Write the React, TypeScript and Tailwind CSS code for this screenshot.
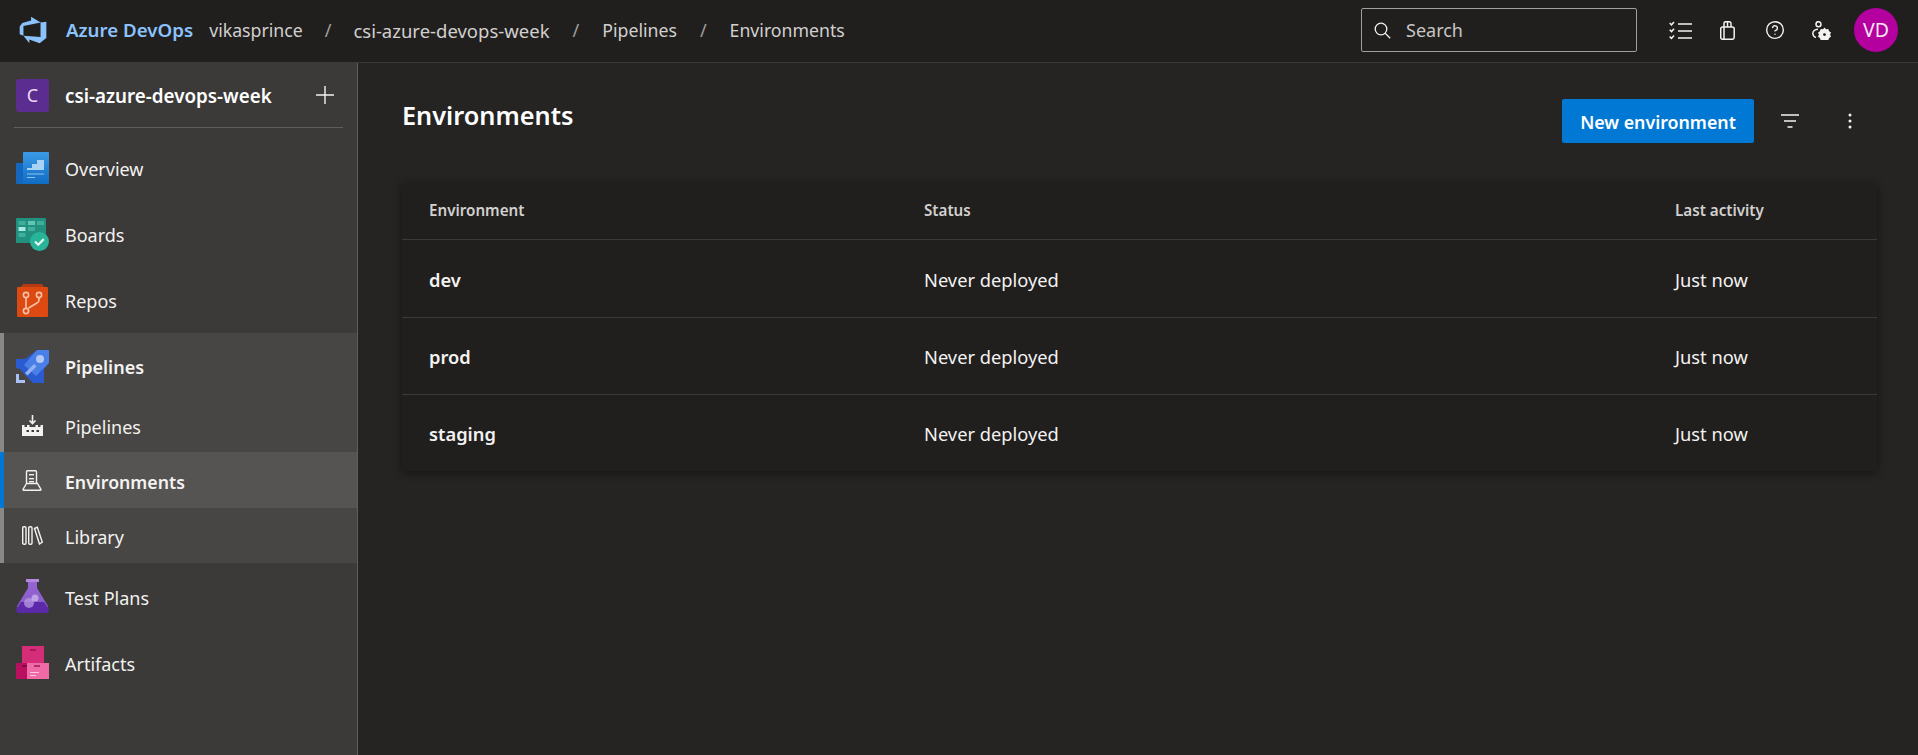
import React from "react";
import { CircleHelp } from "lucide-react";

function Logo() {
  return (
    <svg width="30" height="30" viewBox="0 0 18 18" className="shrink-0">
      <path fill="#8cc2fb" d="M17 4v9.74l-4 3.28-6.2-2.26V17L3.29 12.41l10.23.8V4.44Zm-3.41.49L7.85 1V3.29L2.58 4.84 1 6.87v4.61l2.26 1V6.57Z" />
    </svg>
  );
}

function OverviewIcon() {
  return (
    <svg width="33" height="33" viewBox="0 0 33 33">
      <defs>
        <linearGradient id="ov" x1="0" y1="0" x2="0" y2="1">
          <stop offset="0" stopColor="#3c9be6" />
          <stop offset="1" stopColor="#0f6cc4" />
        </linearGradient>
      </defs>
      <path fill="#1467bd" d="M1 11h10v21H1a1 1 0 0 1-1-1V12a1 1 0 0 1 1-1z" />
      <path fill="url(#ov)" d="M7 1a1 1 0 0 1 1-1h24a1 1 0 0 1 1 1v30a1 1 0 0 1-1 1H7z" />
      <path fill="#a9d3f5" d="M11 16h5v-4h5V8h7v8h0v2H11z" />
      <rect x="11" y="21.5" width="17" height="1" fill="#8cc4f0" />
      <rect x="11" y="25" width="8" height="1" fill="#8cc4f0" />
    </svg>
  );
}

function BoardsIcon() {
  return (
    <svg width="33" height="33" viewBox="0 0 33 33">
      <rect x="0" y="0" width="30" height="25" rx="1" fill="#23917f" />
      <rect x="2.5" y="3" width="7" height="4" fill="#3fae9b" />
      <rect x="12" y="3" width="7" height="4" fill="#62c5b4" />
      <rect x="21" y="3" width="7" height="4" fill="#3fae9b" />
      <rect x="2.5" y="9" width="7" height="4" fill="#a8eadd" />
      <rect x="12" y="9" width="7" height="4" fill="#3fae9b" />
      <rect x="2.5" y="15" width="7" height="4" fill="#3fae9b" />
      <circle cx="23.5" cy="23.5" r="9.5" fill="#27b498" />
      <path d="M19 23.5l3.2 3.2 5.6-5.6" fill="none" stroke="#e6f8f4" strokeWidth="2.2" />
    </svg>
  );
}

function ReposIcon() {
  return (
    <svg width="33" height="33" viewBox="0 0 33 33">
      <path fill="#b53a12" d="M7 0h19l3 4H4z" />
      <path fill="#dc4a12" d="M2 3h29a1 1 0 0 1 1 1v28a1 1 0 0 1-1 1H2a1 1 0 0 1-1-1V4a1 1 0 0 1 1-1z" />
      <g fill="none" stroke="#f7c1a6" strokeWidth="1.6">
        <circle cx="10" cy="11" r="2.6" />
        <circle cx="23" cy="11" r="2.6" />
        <circle cx="10" cy="27" r="2.6" />
        <path d="M10 13.6v11M23 13.6v2.4q0 2-2 3l-8.5 5" />
      </g>
    </svg>
  );
}

function PipelinesIcon() {
  return (
    <svg width="33" height="33" viewBox="0 0 33 33">
      <path fill="#2a5bd0" d="M0 9h9L20 1q1-1 2-1h10a1 1 0 0 1 1 1v11q0 1-1 2l-4 5v14H17l-7-7-6-7-4-1z" />
      <path fill="#4a7fe8" d="M20 1q1-1 2-1h10a1 1 0 0 1 1 1v11q0 1-1 2L20 26 8 15z" />
      <circle cx="24" cy="9" r="4" fill="#b3c8f8" />
      <path fill="#93b1f2" d="M9 23l9-9 2.500 2.500-9 9z" />
      <path fill="#a9c0f5" d="M0 24h3v6h6v3H0z" />
    </svg>
  );
}

function FlaskIcon() {
  return (
    <svg width="33" height="34" viewBox="0 0 33 34">
      <defs>
        <linearGradient id="fl" x1="0" y1="0" x2="0" y2="1">
          <stop offset="0" stopColor="#9464d2" />
          <stop offset="1" stopColor="#8a5ccb" />
        </linearGradient>
      </defs>
      <rect x="10" y="0" width="13" height="3" fill="#b18ae0" />
      <path fill="url(#fl)" d="M12 3h9v6l11.500 19H.5L12 9z" />
      <path fill="#5c2aa8" d="M5 23h23l5 7.500q0 2.500-2.500 3.500h-28Q0 33 0 30.500z" />
      <circle cx="13" cy="24" r="5" fill="#b79be3" opacity=".75" />
      <circle cx="19" cy="19" r="3.500" fill="#c9b3ea" opacity=".8" />
    </svg>
  );
}

function ArtifactsIcon() {
  return (
    <svg width="33" height="33" viewBox="0 0 33 33">
      <rect x="6" y="0" width="22" height="17" fill="#d62d79" />
      <rect x="0" y="17" width="11" height="16" fill="#b80f5e" />
      <rect x="11" y="17" width="22" height="16" fill="#f06aa8" />
      <rect x="14" y="3" width="6" height="2" fill="#a81a5c" />
      <rect x="6" y="19" width="5" height="2" fill="#7e0c42" />
      <rect x="18" y="19" width="6" height="2" fill="#b52a6e" />
      <rect x="14" y="26" width="9" height="1" fill="#fbc4dc" />
      <rect x="14" y="29" width="6" height="1" fill="#fbc4dc" />
    </svg>
  );
}

function SubPipelinesIcon() {
  return (
    <svg width="22" height="22" viewBox="0 0 22 22">
      <g fill="none" stroke="#f3f2f1" strokeWidth="1.6">
        <path d="M10.500 0v8M7.500 5.500l3 3 3-3" />
      </g>
      <path fill="#f3f2f1" d="M0 10h2.500v2H5v-2h2.500v2h6v-2H16v2h2.500v-2H21v11H0z" />
      <g fill="#3b3a39">
        <rect x="4.500" y="15" width="2.500" height="2" />
        <rect x="9.500" y="15" width="2.500" height="2" />
        <rect x="14.500" y="15" width="2.500" height="2" />
      </g>
    </svg>
  );
}

function EnvIcon() {
  return (
    <svg width="20" height="21" viewBox="0 0 20 21">
      <g fill="none" stroke="#f3f2f1" strokeWidth="1.4">
        <path d="M4.500 13.500V1.700a1 1 0 0 1 1-1h8a1 1 0 0 1 1 1v11.800" />
        <path d="M4.500 13.500L1 19.500q0 .8 .8 .8h16.400q.8 0 .8-.8l-3.500-6z" />
      </g>
      <rect x="7" y="4" width="5" height="1.400" fill="#f3f2f1" />
      <rect x="7" y="8" width="5" height="1.400" fill="#f3f2f1" />
      <rect x="7" y="11" width="5" height="1.400" fill="#f3f2f1" />
    </svg>
  );
}

function LibraryIcon() {
  return (
    <svg width="21" height="19" viewBox="0 0 21 19">
      <g fill="none" stroke="#f3f2f1" strokeWidth="1.4">
        <rect x=".7" y=".7" width="3.300" height="17.500" rx="1.200" />
        <rect x="6.700" y=".7" width="3.300" height="17.500" rx="1.200" />
        <path d="M12.500 2.500l2.800-1.300 5 15-2.800 1.800z" />
      </g>
    </svg>
  );
}

function TasksIcon() {
  return (
    <svg width="23" height="19" viewBox="0 0 23 19">
      <g fill="none" stroke="#f3f2f1">
        <path strokeWidth="1.500" d="M.7 2l1.800 1.800L5 1M.7 8.800l1.800 1.800L5 7.800M.7 15.600l1.800 1.800L5 14.600" />
        <path strokeWidth="1.500" d="M9 3h14M9 10h14M9 17h14" />
      </g>
    </svg>
  );
}

function BagIcon() {
  return (
    <svg width="15" height="19" viewBox="0 0 15 19">
      <g fill="none" stroke="#f3f2f1" strokeWidth="1.500">
        <rect x=".7" y="6" width="13.500" height="12.300" rx="2" />
        <path d="M4 6V2.500a1.800 1.800 0 0 1 1.800-1.800h3.400A1.800 1.800 0 0 1 11 2.500V6M7.500 1v5" />
        <path d="M4 6v12.300" />
      </g>
    </svg>
  );
}

function UserGearIcon() {
  return (
    <svg width="19" height="19" viewBox="0 0 19 19">
      <g fill="none" stroke="#f3f2f1" strokeWidth="1.500">
        <circle cx="6.500" cy="3.200" r="2.500" />
        <path d="M6 8.200Q1 8.500 .8 12.500q.2 3 3.200 4" />
      </g>
      <path fill="#f3f2f1" d="M12.500 6.500l1.500 1.800 2.300-.3.800 2.300 1.900 1.200-.9 2.100.9 2.100-1.900 1.200-.8 2.300-2.300-.3-1.500 1.800-1.500-1.800-2.300.3-.8-2.300-1.900-1.200.9-2.100-.9-2.100 1.900-1.200.8-2.300 2.300.3z" />
      <circle cx="12.500" cy="13.600" r="1.400" fill="#201f1e" />
    </svg>
  );
}

function SearchIcon() {
  return (
    <svg width="17" height="17" viewBox="0 0 17 17" className="shrink-0">
      <circle cx="7" cy="7" r="5.800" fill="none" stroke="#f3f2f1" strokeWidth="1.300" />
      <path d="M11.200 11.200l5 5" stroke="#f3f2f1" strokeWidth="1.300" />
    </svg>
  );
}

function FilterIcon() {
  return (
    <svg width="18" height="14" viewBox="0 0 18 14">
      <path d="M0 1h18M3 7h12M6.500 13h5" stroke="#f3f2f1" strokeWidth="1.500" />
    </svg>
  );
}

function KebabIcon() {
  return (
    <svg width="4" height="16" viewBox="0 0 4 16">
      <circle cx="2" cy="2" r="1.500" fill="#f3f2f1" />
      <circle cx="2" cy="8" r="1.500" fill="#f3f2f1" />
      <circle cx="2" cy="14" r="1.500" fill="#f3f2f1" />
    </svg>
  );
}

function NavItem({ icon, label, low }: { icon: React.ReactNode; label: string; low?: boolean }) {
  return (
    <div className="flex h-[66px] items-center pl-4">
      <div className="flex w-[49px] shrink-0 items-center">{icon}</div>
      <span className={(low ? "pt-[4px]" : "pt-[2px]") + " text-[#f3f2f1]"}>{label}</span>
    </div>
  );
}

function SubItem({
  icon,
  label,
  active,
  className,
}: {
  icon: React.ReactNode;
  label: string;
  active?: boolean;
  className: string;
}) {
  return (
    <div
      className={
        "flex items-center border-l-4 pl-[18px] " +
        (active ? "border-[#0078d4] bg-[#565452] text-[17.7px] font-semibold " : "border-[#8a8886] ") +
        className
      }
    >
      <div className="flex w-[43px] shrink-0 items-center">{icon}</div>
      <span className="pt-[4px] text-[#f3f2f1]">{label}</span>
    </div>
  );
}

const rows = [
  { name: "dev", cls: "h-[78px] pt-[3px] border-b border-[#3b3a39]" },
  { name: "prod", cls: "h-[77px] pt-[1px] border-b border-[#3b3a39]" },
  { name: "staging", cls: "h-[76px] pt-[1px]" },
];

export default function App() {
  return (
    <div className="flex h-[755px] w-[1918px] flex-col overflow-hidden bg-[#252423] font-['Noto_Sans',sans-serif] text-[18px] text-[#f3f2f1]">
      <header className="flex h-[63px] shrink-0 items-center border-b border-[#3b3a39] bg-[#201f1e] pb-[2px] pr-5">
        <div className="ml-[18px] flex w-[48px] shrink-0 items-center">
          <Logo />
        </div>
        <span className="pt-[1px] text-[18.7px] font-semibold text-[#8cc2fb]">Azure DevOps</span>
        <span className="ml-[16px] pt-[1px] text-[17.7px] text-[#d2d0ce]">vikasprince</span>
        <span className="mx-[22px] pt-[1px] text-[#a19f9d]">/</span>
        <span className="pt-[1px] text-[18.5px] text-[#d2d0ce]">csi-azure-devops-week</span>
        <span className="mx-[23px] pt-[1px] text-[#a19f9d]">/</span>
        <span className="pt-[1px] text-[17.7px] text-[#d2d0ce]">Pipelines</span>
        <span className="mx-[23px] pt-[1px] text-[#a19f9d]">/</span>
        <span className="pt-[1px] text-[17.7px] text-[#d2d0ce]">Environments</span>
        <div className="ml-auto flex h-[44px] w-[276px] items-center rounded-[2px] border border-[#a19f9d] pl-[12px]">
          <SearchIcon />
          <span className="ml-[15px] text-[#c8c6c4]">Search</span>
        </div>
        <div className="ml-[20px] flex items-center">
          <div className="flex w-[47px] justify-center"><TasksIcon /></div>
          <div className="flex w-[47px] justify-center"><BagIcon /></div>
          <div className="flex w-[47px] justify-center"><CircleHelp size={20} strokeWidth={1.7} color="#f3f2f1" /></div>
          <div className="flex w-[47px] justify-center"><UserGearIcon /></div>
        </div>
        <div className="ml-[9px] flex h-[44px] w-[44px] items-center justify-center rounded-full bg-[#b4009e] text-[19.5px] text-[#f8e6f5]">VD</div>
      </header>

      <div className="flex min-h-0 flex-1">
        <aside className="flex w-[358px] shrink-0 flex-col border-r border-[#605e5c] bg-[#3b3a39]">
          <div className="mx-[14px] flex h-[65px] shrink-0 items-center border-b border-[#605e5c] pl-[2px]">
            <div className="flex h-[33px] w-[33px] shrink-0 items-center justify-center rounded-[3px] bg-[#5c2d91] text-[#e6dcf2]">C</div>
            <span className="ml-[16px] pt-[2px] text-[18.8px] font-semibold text-white">csi-azure-devops-week</span>
            <svg width="18" height="18" viewBox="0 0 18 18" className="ml-auto mr-[9px]">
              <path d="M9 0v18M0 9h18" stroke="#f3f2f1" strokeWidth="1.400" />
            </svg>
          </div>
          <div className="h-[7px] shrink-0" />
          <NavItem icon={<OverviewIcon />} label="Overview" />
          <NavItem icon={<BoardsIcon />} label="Boards" />
          <NavItem icon={<ReposIcon />} label="Repos" />
          <div className="flex flex-col bg-[#484644]">
            <div className="flex h-[66px] items-center border-l-4 border-[#8a8886] pl-3">
              <div className="flex w-[49px] shrink-0 items-center"><PipelinesIcon /></div>
              <span className="pt-[2px] font-semibold text-[#f3f2f1]">Pipelines</span>
            </div>
            <SubItem icon={<SubPipelinesIcon />} label="Pipelines" className="h-[53px]" />
            <SubItem icon={<EnvIcon />} label="Environments" active className="h-[56px]" />
            <SubItem icon={<LibraryIcon />} label="Library" className="h-[55px]" />
          </div>
          <NavItem icon={<FlaskIcon />} label="Test Plans" low />
          <NavItem icon={<ArtifactsIcon />} label="Artifacts" low />
        </aside>

        <main className="min-w-0 flex-1 pl-[44px] pr-[41px]">
          <div className="flex h-[120px] items-start">
            <h1 className="mt-[32px] text-[25.3px] font-semibold leading-[40px] text-white">Environments</h1>
            <div className="ml-auto mt-[36px] flex items-center">
              <button className="flex h-[44px] w-[192px] items-center justify-center rounded-[2px] bg-[#0078d4] pt-[2px] text-[17.8px] font-semibold text-white">New environment</button>
              <div className="ml-[27px] flex w-[18px] justify-center"><FilterIcon /></div>
              <div className="ml-[49px] mr-[25px] flex w-[4px] justify-center"><KebabIcon /></div>
            </div>
          </div>
          <div className="rounded-[2px] bg-[#201f1e] shadow-[0_2px_8px_rgba(0,0,0,0.45)]">
            <div className="grid h-[57px] grid-cols-[495px_751px_1fr] items-center border-b border-[#3b3a39] pb-[2px] pl-[27px] text-[15.2px] font-semibold text-[#d2d0ce]">
              <span>Environment</span>
              <span>Status</span>
              <span>Last activity</span>
            </div>
            {rows.map((r) => (
              <div
                key={r.name}
                className={"grid grid-cols-[495px_751px_1fr] items-center pl-[27px] text-[18.3px] " + r.cls}
              >
                <span className="font-semibold text-[#f3f2f1]">{r.name}</span>
                <span className="text-[#f3f2f1]">Never deployed</span>
                <span className="text-[#f3f2f1]">Just now</span>
              </div>
            ))}
          </div>
        </main>
      </div>
    </div>
  );
}
